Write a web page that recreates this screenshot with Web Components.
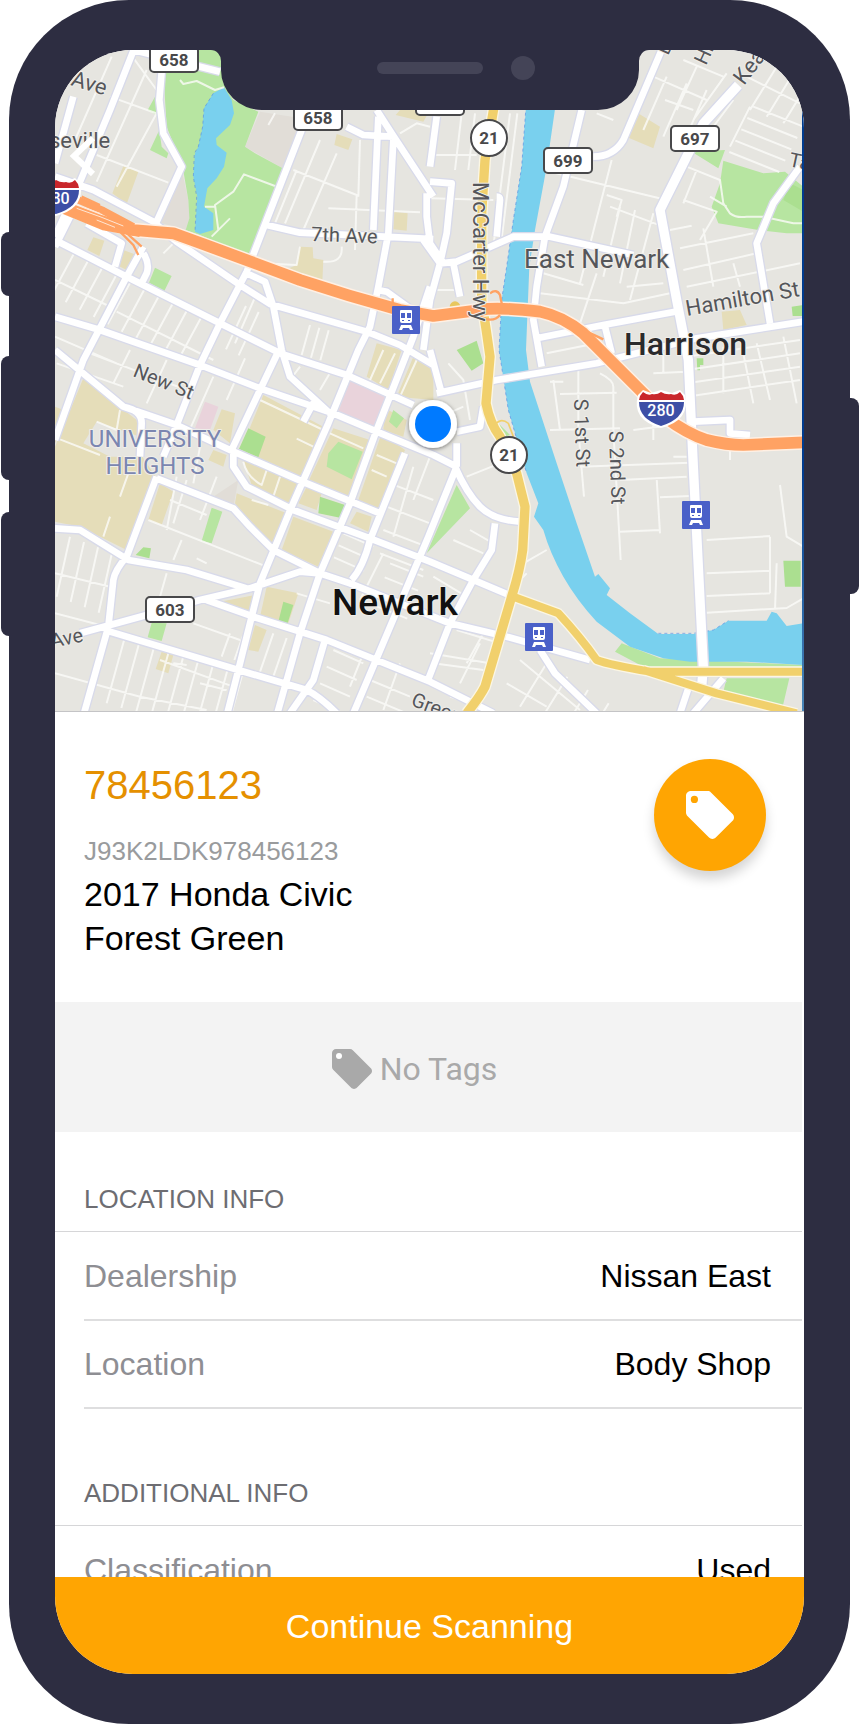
<!DOCTYPE html>
<html lang="en">
<head>
<meta charset="utf-8">
<meta name="viewport" content="width=device-width, initial-scale=1">
<title>Vehicle details</title>
<style>
  body { margin: 0; background: #fff; font-family: "Liberation Sans", Arial, sans-serif; }
</style>
</head>
<body>
<phone-frame>
  <city-map></city-map>
  <vehicle-summary>
    <span slot="stock">78456123</span>
    <span slot="vin">J93K2LDK978456123</span>
    <span slot="model">2017 Honda Civic</span>
    <span slot="paint">Forest Green</span>
  </vehicle-summary>
  <tag-strip>No Tags</tag-strip>
  <info-section>
    <span slot="title">LOCATION INFO</span>
    <info-row><span slot="label">Dealership</span>Nissan East</info-row>
    <info-row><span slot="label">Location</span>Body Shop</info-row>
  </info-section>
  <info-section>
    <span slot="title">ADDITIONAL INFO</span>
    <info-row><span slot="label">Classification</span>Used</info-row>
  </info-section>
  <action-button slot="footer">Continue Scanning</action-button>
</phone-frame>

<script>
function define(name, html) {
  const template = document.createElement('template');
  template.innerHTML = html;
  customElements.define(name, class extends HTMLElement {
    constructor() {
      super();
      this.attachShadow({ mode: 'open' }).append(template.content.cloneNode(true));
    }
  });
}

define('tag-icon', `
<style>
  :host { display: block; width: 40px; height: 40px; }
  svg { display: block; width: 100%; height: 100%; fill: currentColor; }
  circle { fill: var(--hole, #fff); }
</style>
<svg viewBox="2 2 20 20" aria-hidden="true">
  <path d="M21.41 11.58l-9-9C12.05 2.22 11.55 2 11 2H4c-1.1 0-2 .9-2 2v7c0 .55.22 1.05.59 1.42l9 9c.36.36.86.58 1.41.58s1.05-.22 1.41-.59l7-7c.37-.36.59-.86.59-1.41s-.23-1.06-.59-1.42z"/>
  <circle cx="5.5" cy="5.5" r="1.5"/>
</svg>`);

define('phone-frame', `
<style>
  :host { display: block; padding: 0 9px; }
  .body { position: relative; box-sizing: border-box; height: 100vh; min-height: 900px; padding: 50px 46px; background: #2d2d41; border-radius: 120px; }
  .screen { height: 100%; display: flex; flex-direction: column; overflow: hidden; background: #fff; border-radius: 78px; }
  .scroll { flex: 1; min-height: 0; overflow: auto; scrollbar-width: none; }
  .key { position: absolute; background: #2d2d41; width: 16px; }
  .left { left: -8px; border-radius: 8px 0 0 8px; }
  .right { right: -9px; border-radius: 0 8px 8px 0; }
  .notch { position: absolute; top: 50px; left: 50%; margin-left: -219px; width: 438px; height: 60px; }
  .back { position: absolute; left: 56px; top: 130px; width: 36px; height: 52px; padding: 0; border: 0; background: none; }
  .back svg { display: block; }
</style>
<div class="body">
  <i class="key left" style="top:232px;height:64px"></i>
  <i class="key left" style="top:356px;height:124px"></i>
  <i class="key left" style="top:512px;height:124px"></i>
  <i class="key right" style="top:398px;height:196px"></i>
  <div class="screen">
    <div class="scroll"><slot></slot></div>
    <slot name="footer"></slot>
  </div>
  <svg class="notch" viewBox="0 0 438 60" aria-hidden="true">
    <path fill="#2d2d41" d="M0 -1V0A10 11 0 0 1 10 11V20A41 40 0 0 0 51 60H387A41 40 0 0 0 428 20V11A10 11 0 0 1 438 0V-1Z"/>
    <rect x="166" y="12" width="106" height="12" rx="6" fill="#444457"/>
    <circle cx="312" cy="18" r="12" fill="#444457"/>
  </svg>
  <button class="back" type="button" aria-label="Back">
    <svg width="36" height="52" viewBox="0 0 36 52" fill="none" stroke="#fff" stroke-width="6"><path d="M28 8L9 26L28 44"/></svg>
  </button>
</div>`);

define('vehicle-summary', `
<style>
  :host { display: flex; justify-content: space-between; align-items: flex-start; box-sizing: border-box; padding: 47px 38px 30px 29px; min-height: 290px; }
  h1 { margin: 0 0 19px; font-size: 40px; line-height: 52px; font-weight: 400; color: #e59000; }
  p { margin: 0; font-size: 34px; line-height: 44px; color: #000; }
  .vin { font-size: 26px; line-height: 42px; color: #999b9d; }
  button { flex: none; width: 112px; height: 112px; border: 0; padding: 0; border-radius: 50%; background: #ffa502; color: #fff; display: grid; place-items: center; box-shadow: 0 8px 12px rgba(0,0,0,.17); --hole: #ffa502; }
  tag-icon { width: 48px; height: 48px; }
</style>
<div class="text">
  <h1><slot name="stock"></slot></h1>
  <p class="vin"><slot name="vin"></slot></p>
  <p><slot name="model"></slot></p>
  <p><slot name="paint"></slot></p>
</div>
<button type="button" aria-label="Add tag"><tag-icon></tag-icon></button>`);

define('tag-strip', `
<style>
  :host { display: flex; justify-content: center; align-items: center; gap: 8px; height: 130px; margin-right: 2px; padding: 4px 28px 0 0; box-sizing: border-box; background: #f3f3f3; color: #a9a9a9; font-family: Roboto, sans-serif; font-size: 32px; line-height: 40px; --hole: #fff; }
</style>
<tag-icon></tag-icon><span><slot></slot></span>`);

define('info-section', `
<style>
  :host { display: block; margin-right: 2px; padding-top: 51px; }
  h2 { margin: 0; padding: 0 29px 16px; font-size: 26px; line-height: 32px; font-weight: 400; color: #6d6d72; border-bottom: 1px solid #d6d6d8; }
  .rows { padding: 1px 0 17px 29px; }
</style>
<h2><slot name="title"></slot></h2>
<div class="rows"><slot></slot></div>`);

define('info-row', `
<style>
  :host { display: flex; justify-content: space-between; align-items: center; height: 86px; padding: 0 31px 0 0; border-bottom: 2px solid #dededf; font-size: 32px; line-height: 40px; color: #000; }
  .label { color: #8e8e93; }
</style>
<span class="label"><slot name="label"></slot></span><span><slot></slot></span>`);

define('action-button', `
<style>
  :host { display: block; }
  button { display: block; width: 100%; height: 97px; border: 0; padding: 0; background: #ffa502; color: #fff; font: inherit; font-size: 34px; line-height: 40px; }
</style>
<button type="button"><slot></slot></button>`);

/* n parallel segments: start x,y; direction vx,vy; step sx,sy */
const hatch = (x, y, vx, vy, sx, sy, n) =>
  Array.from({ length: n }, (_, i) => `M${x + sx * i} ${y + sy * i}l${vx} ${vy}`).join('');

const minor = [
  'M335 170L225 420M440 210L290 545M470 340L350 560M330 290L475 342M290 465L505 548M390 160L470 270',
  'M540 240L550 252L590 243L645 270L672 262M825 558L732 523L700 575L645 615L655 690M615 620H645M690 655L635 710',
  'M880 510L1070 585L1065 750M985 625L1260 637M890 510L825 670M960 420L855 670M1010 460L910 690M1080 420L1075 590M825 340L805 375M780 790L890 795L900 740M970 785Q1030 790 1025 740',
  'M165 840L320 915M350 935L640 1080M165 1010L350 1090',
  hatch(225, 755, -70, 130, 42, 22, 10),
  hatch(700, 900, -60, 130, 38, 18, 3), hatch(930, 975, -25, 90, 28, 8, 3), hatch(770, 880, -65, 150, 0, 0, 1),
  'M520 730L490 760M170 1090L370 1160M270 1060L560 1170M390 1050L340 1150M500 1080L440 1210M640 1130L560 1310M735 1075L680 1200M900 1100L870 1140M995 1110L960 1170',
  'M180 1318L300 1365M290 1265L350 1290L360 1230M385 1420L360 1490M330 1550L310 1610M530 1430L500 1590M560 1440L520 1570M510 1500L620 1545M445 1560L800 1700M650 1430L600 1560M545 1620L520 1680M590 1675L620 1690M500 1720L480 1790M600 1340L580 1450',
  'M780 1200L970 1290M890 1316L940 1340M990 1300L1090 1345M1130 1365L1190 1390M730 1385Q740 1430 785 1455L800 1410M840 1430L820 1490M755 1500L805 1515M1115 1410L1160 1430',
  hatch(210, 1610, -40, 180, 42, 16, 4), 'M165 1720L330 1760M165 1840L320 1880M165 2020L420 2090L620 2130',
  hatch(375, 1910, -55, 200, 44, 14, 9), 'M480 1980L700 2060M520 1990L560 1995M600 2050L680 2070M580 1870L720 1920',
  hatch(690, 1900, -25, 70, 38, 10, 2), hatch(820, 1900, -45, 130, 40, 14, 2), 'M890 1780L990 1810',
  hatch(1030, 1600, 90, 40, -14, 36, 3), hatch(1170, 1690, 100, 40, -16, 42, 4), hatch(1170, 1450, 130, 50, -10, 70, 4), 'M1240 1400L1180 1610M1290 1370L1240 1500M1150 1660L1080 1800',
  hatch(1000, 1950, 90, 40, -20, 50, 4), hatch(1110, 2040, 120, 50, -10, 50, 2), 'M1090 1960L1050 2060M1200 1990L1150 2130',
  'M1150 1050L1110 1140M1185 1060L1140 1150M1250 1080L1200 1190',
  'M1200 400L1250 370L1290 380M1290 465H1430M1290 595L1480 600M1300 870H1380',
  hatch(1385, 340, -20, 170, 40, 0, 2), hatch(1530, 340, -50, 400, 22, 0, 2),
  'M1650 515L2000 600M1960 230L2120 300M1790 340L1840 360',
  hatch(2000, 230, -70, 160, 60, 20, 3), hatch(2090, 200, -60, 130, 0, 0, 1), hatch(2180, 220, -100, 140, 0, 0, 1), 'M1995 300L2080 330M2050 180L2170 230M2200 300L2110 420M2250 320L2190 440',
  hatch(2260, 320, 150, 60, -18, 34, 5), hatch(2330, 200, -80, 130, 50, 20, 3), 'M2240 230L2400 310',
  'M2060 500L2160 540L2170 610L2190 640Q2210 655 2240 650H2290L2380 670H2410M2050 600L2150 635L2100 720M2130 590L2180 620M2090 510L2050 610',
  'M1835 480L1740 850M1820 585L1865 600L1850 650M1860 620L1810 830M1905 630L1860 850M1960 640L1890 900M1830 620L1990 680M2010 690L2075 677M2110 685L2140 860M2040 745L2260 700M2050 810L2270 760M2060 860L2400 790M2200 790L2220 860',
  'M1630 820L1750 855M1620 880L1870 910L2010 880M1610 940L1700 960M1790 820L1730 1000M1880 860L1990 850M1640 1060L1790 1030',
  hatch(2060, 1070, 340, -50, 0, 40, 4), 'M2170 1040V1180M2230 1060L2260 1210M2270 1030L2310 1200M2350 1010L2390 1210M1990 1060V1120M1960 1120L2060 1115M2080 1140V1250',
  'M1660 1140L1680 1290M1650 1145H1690M1735 1110V1290L1752 1490M1800 1120Q1840 1140 1840 1160V1290L1862 1680M1680 1182L1850 1178M1650 1290L1860 1285M1960 1180V1320M1900 1290L2060 1270M1740 1400L2070 1388M2020 1370H2060M1970 1436L1980 1600M1860 1440L2060 1430M1860 1595L1980 1590M1980 1492L2070 1488M2190 1280V1380',
  'M2340 1455L2360 1610L2410 1640M2120 1620L2310 1608M2120 1720L2310 1712M2120 1788L2310 1780M2120 1838L2360 1824L2410 1795M2310 1610V1780M2330 1690L2325 1830',
  'M1345 1090L1390 1140L1410 1260M1300 1260L1390 1220M1400 1430L1500 1390M1410 1590L1480 1630M1360 1620L1450 1660M1300 1730L1400 1790M1340 1700L1380 1720M1570 1690L1640 1650M1580 1720L1540 1760M1450 1900L1400 1990M1300 1990L1450 2010M1370 1890L1500 1930M1440 1930L1380 2050M1290 1960L1470 1990',
  hatch(1640, 1990, -80, 130, 62, 40, 5), 'M1520 2050L1640 2120M1560 1980L1740 2130M1350 2090L1440 2120'
].join('');

const major = [
  'M405 140L330 330L240 545L165 710M220 290L165 490M165 530L280 570L460 665L530 725L720 855L810 912L1100 995L1200 1035L1300 1095',
  'M485 215L478 300L490 400L545 500L470 665M400 150L660 215',
  'M165 720L380 830L660 970L845 1062L1040 1125L1240 1215M165 950L300 990L600 1095L780 1165L1000 1240L1130 1295L1300 1365L1370 1400',
  'M905 390L800 660L740 815L660 970L600 1095L530 1275L490 1370M800 675L900 698L1150 710L1300 717M1130 330L1175 400L1300 590M1040 380L1090 405L1175 410M1135 350L1120 690',
  'M1180 420L1165 700L1135 860L1110 980L1075 1050L985 1270L875 1520L780 1750L715 2010L682 2140M740 820L795 845L820 920L845 1050L870 1130L990 1240M1135 870L1160 875L1250 940',
  'M1280 580V650L1290 730L1330 790M1290 860L1240 1010L1130 1290L1050 1510L960 1720L900 1900L832 2140',
  'M165 740L210 650M260 670L365 730L345 800M430 740L380 830L250 1080L165 1320M430 760Q450 790 440 820L425 850',
  'M165 1050L370 1220L530 1275L690 1350L920 1450L1140 1540M370 1220Q425 1230 425 1270L420 1370',
  'M470 1430L380 1670Q345 1710 340 1740L325 1880L252 2140M470 1435L700 1525L750 1580L820 1650L960 1720L1050 1750L1350 1870L1520 1910L1770 1980',
  'M165 1585L240 1590L385 1680L560 1710L740 1765M240 1900L440 1845L600 1800L750 1765L900 1715L960 1720M620 1800L760 1850L980 1920L1290 2045L1480 2140M330 1895L715 2010L920 2070Q960 2090 1010 2140',
  'M975 1920L940 2040L870 2140M1215 1360L1110 1620Q1090 1700 1055 1740M700 1360V1400L740 1460L880 1530L1110 1615L1290 1685L1540 1790M830 1065L780 1170L690 1360',
  'M1370 1400L1285 1610L1060 2140M1420 1740L1350 1870L1280 2050M1485 1570L1475 1650L1420 1740M1365 1400Q1400 1480 1440 1520T1560 1565',
  'M1290 1050L1325 1180M1370 1330V1400M1370 1295L1440 1280L1450 1220M1310 1180L1490 1140L1790 1090L2090 1015L2410 965M1610 1015L1810 975L2025 935M910 1265L945 1200M940 1200L990 1240',
  'M1290 545L1355 550L1340 700L1320 790L1290 900M1270 720L1320 790M1310 350L1290 500M1490 590Q1500 590 1500 600L1490 710M1320 790L1370 785L1540 710H1650L1900 765M1360 790L1380 890',
  'M1745 330L1690 560L1635 710L1610 860L1600 960L1625 1100M1985 150L1870 420Q1840 470 1780 470M1815 980L1835 1060',
  'M2400 500L2320 610L2270 730L2310 970M2080 1265L2190 1260V1300L2250 1305M1620 1950L1665 2020L1790 2140M2170 2035L2080 2140M2070 2050L2040 2140M1290 900L1270 1050'
].join('');

const wide = 'M2215 255L2110 370L1980 630L2030 900L2065 1080L2080 1400L2110 2000L2105 2060';
const highway = 'M190 620L300 662L400 690L520 700Q700 765 900 840Q1050 890 1200 930L1300 948L1440 930Q1490 920 1620 935Q1690 950 1750 1000L1930 1180L2000 1255Q2060 1300 2120 1320Q2180 1335 2230 1335L2412 1327';
const route21 = 'M1482 320L1455 480L1445 640V900L1460 1000L1470 1070L1458 1210Q1470 1270 1500 1310L1550 1420L1575 1520L1568 1650Q1560 1710 1535 1790L1455 2060Q1440 2090 1400 2140';
const route21b = 'M1540 1790L1675 1840Q1740 1910 1790 1980Q1830 1995 1950 2015H2412M1930 2010L2150 2080L2390 2140';

const train = (x, y) => `<g transform="translate(${x} ${y})">
  <rect width="28" height="28" rx="1" fill="#4a60c8"/>
  <path fill="#fff" fill-rule="evenodd" d="M9 4H19Q20 4 20 5V15Q20 17 18 17H10Q8 17 8 15V5Q8 4 9 4ZM9 7V12H13V7ZM15 7V12H19V7ZM10 14V15H12V14ZM16 14V15H18V14ZM9 19H19L21 24H18L17 22H11L10 24H7Z"/></g>`;
const box = (x, y, t) => `<rect x="${x - 24}" y="${y - 13}" width="48" height="25" rx="4" fill="#fff" stroke="#48484a" stroke-width="2"/>${t && `<text class="no" x="${x}" y="${y + 6}">${t}</text>`}`;
const disc = (x, y) => `<circle cx="${x}" cy="${y}" r="18" fill="#fff" stroke="#48484a" stroke-width="2"/><text class="no" x="${x}" y="${y + 6}">21</text>`;
const shield = (x, y) => `<g transform="translate(${x} ${y})">
  <path fill="#fff" d="M-1 3L4 -2L12 1L22 -2L33 1L41 -2L46 3Q52 28 22 36Q-8 28 -1 3Z"/>
  <path fill="#c9272b" d="M1 4L4 0Q9 4 13 2Q18 3 22 0Q27 3 32 2Q37 4 41 0L44 4L45 8H0Z"/>
  <path fill="#3d4fa6" d="M0 10H45Q45 27 22 34Q0 27 0 10Z"/>
  <text class="sh" x="22" y="24">280</text></g>`;

define('city-map', `
<style>
  :host { display: block; border-bottom: 1px solid #c4c4c6; }
  svg { display: block; width: 100%; height: auto; }
  text { font-family: Roboto, sans-serif; fill: #55565a; font-size: 20px; stroke: #efeeea; stroke-width: 2px; paint-order: stroke; stroke-linejoin: round; }
  .no { font-size: 17px; font-weight: 700; fill: #48484a; text-anchor: middle; stroke: none; }
  .sh { font-size: 16px; font-weight: 500; fill: #fff; text-anchor: middle; stroke: none; }
  .road { font-size: 22px; }
  .town { font-size: 26px; }
  .city { font-size: 32px; font-weight: 500; fill: #2a2a2c; }
  .main { font-size: 37px; font-weight: 500; fill: #111; }
  .area { font-size: 24px; fill: #7b86b0; text-anchor: middle; }
</style>
<svg viewBox="55 50 749 661" role="img" aria-label="Map of Newark">
  <defs>
    <linearGradient id="edge" x1="0" y1="0" x2="0" y2="1"><stop offset="0" stop-color="#003b8e"/><stop offset=".6" stop-color="#003b8e"/><stop offset="1" stop-color="#4a86b8"/></linearGradient>
    <filter id="soft" x="-30%" y="-30%" width="160%" height="160%"><feDropShadow dx="0" dy="1" stdDeviation="2" flood-opacity=".5"/></filter>
  </defs>
  <rect x="50" y="45" width="760" height="670" fill="#e6e5e0"/>
  <g transform="scale(.33333333)" fill="none" stroke-linejoin="round">
    <path fill="#e1ddd7" d="M545 510L565 600L568 655L557 690L470 665ZM780 335L1000 370L900 400L848 505L735 440ZM715 1440L700 1520L640 1490Z"/>
    <path fill="#e5ddb9" d="M370 498l45 17l-35 97l-43 -32ZM1010 402l47 16l-12 32l-42 -15ZM1183 635l40 5l-3 52l-40 -4ZM900 740l38 2l2 33l30 5l-3 65l-107 -37l30 -13ZM280 712l33 10l-15 46l-36 -18ZM370 750l40 15l-25 47l-35 -17ZM1200 330h90l-20 35l-83 -20Z
      M250 1135L410 1260L420 1360L470 1435L380 1650L240 1580L165 1565V1340ZM165 1220l20 8l-10 82l-10 20ZM480 1450l40 25l-35 100l-40 -15ZM665 1228l40 12l-15 90l-50 -40ZM640 1350l40 15l-10 35l-45 -20Z
      M790 1185L970 1280L915 1435L720 1355ZM1000 1285L1110 1320L1050 1490L925 1445ZM1145 1300L1215 1350L1140 1530L1075 1500ZM730 1380L900 1450L870 1520L760 1470ZM710 1480L860 1540L820 1635L750 1570L705 1510ZM880 1550L1000 1595L955 1700L845 1650ZM920 1460l45 20l-15 50l-55 -20ZM1070 1535l45 15l-10 45l-55 -25Z
      M1130 1030L1205 1050L1165 1170L1100 1130ZM1240 1070L1300 1100V1200L1190 1190ZM660 1805L765 1785L750 1835ZM800 1760L895 1780L865 1870L780 1850ZM765 1875l35 15l-25 65l-30 -5ZM485 1955l35 10l-15 55l-38 -13ZM1155 1225L1220 1260L1210 1310L1150 1290Z
      M1918 342l62 38l-20 65l-78 -33ZM2165 935l55 -5l20 45l-70 15ZM1280 1105L1300 1120V1170H1280Z"/>
    <path fill="#e6e5e0" d="M290 1265L420 1310V1370H330L250 1330Z"/>
    <path fill="#e9d3db" d="M615 1205l40 15l-25 70l-45 -5ZM1050 1138L1155 1190L1125 1280L1015 1235Z"/>
    <path fill="#b7e5a1" d="M490 215L597 195V140H670V250L700 300L775 335L735 440L765 460L848 505L750 770L600 705L557 690L568 655L565 600L548 500L500 380ZM468 285L443 330L470 345ZM478 390L450 450L500 475L505 460L485 440ZM465 803l50 25l-22 45l-46 -25Z
      M1015 1325L1088 1355L1055 1438L980 1400L985 1360ZM635 1523l32 12l-32 95l-30 -7ZM1180 1230l32 25l-22 30l-23 -20ZM455 1868l45 2l-15 53l-42 -11ZM1370 1455L1410 1525L1280 1660ZM1845 1955L1865 1930L1980 1975L2410 1995V2000H1930ZM2180 2035H2368L2348 2120L2170 2075ZM1495 1270L1530 1305L1515 1310Z
      M2075 455L2175 450L2155 505ZM2170 482L2290 520L2355 515L2410 560V700H2360L2275 690L2155 670L2135 620L2160 550Z"/>
    <path fill="#abdf90" d="M745 1285l52 25l-22 62l-58 -25ZM960 1490l75 25l-15 38l-65 -13ZM850 1805l30 10l-18 57l-27 -7ZM407 1665l23 -23l23 3l-5 30ZM2350 1682H2402V1760H2355ZM2375 920l35 -5v33h-32ZM1370 1050L1430 1022L1450 1090L1415 1112ZM2370 550L2410 570V635L2350 600ZM2090 1075h20v20h-10v16h-8Z"/>
    <path fill="#79d0ee" d="M672 262L640 280L612 325L608 380L595 440L585 460L580 530L592 590L585 695L600 702L640 690V640L612 620L622 565L650 535L672 500L680 458L650 435L648 415L690 375L702 340L695 300Z
      M1578 320L1565 500L1540 660L1520 800L1505 900L1497 1050L1525 1230L1580 1420L1615 1510L1602 1550L1630 1590Q1650 1660 1690 1730T1790 1865L1890 1940L1990 1975L2070 1985H2240L2410 1995V1870L2360 1878L2330 1840L2315 1835L2300 1862H2185L2140 1890L2080 1902H1975L1890 1840L1820 1785L1830 1765L1795 1722L1785 1730L1730 1570L1670 1390L1590 1145L1578 1050L1588 800L1605 690L1640 500L1666 320Z"/>
    <path stroke="#5b93e6" stroke-width="3" stroke-dasharray="9 9" stroke-opacity=".7" d="M640 280L612 325L608 380L595 440L583 460L580 530L590 590L585 695M1578 320L1565 500L1540 660L1520 800L1505 900L1497 1050L1525 1230L1580 1420M1975 1900H2080L2140 1890L2185 1862"/>
    <path stroke="#fbfbf9" stroke-width="6" stroke-opacity=".8" d="${minor}"/>
    <path stroke="#d8daea" stroke-width="28" d="${major}"/>
    <path stroke="#d8daea" stroke-width="36" d="${wide}"/>
    <path stroke="#fff" stroke-width="20" d="${major}"/>
    <path stroke="#fff" stroke-width="28" d="${wide}"/>
    <path stroke="#fbf6e4" stroke-width="36" d="${route21}"/>
    <path stroke="#fbf6e4" stroke-width="32" d="${route21b}"/>
    <path stroke="#f1d06c" stroke-width="28" d="${route21}"/>
    <path stroke="#f1d06c" stroke-width="24" d="${route21b}"/>
    <path stroke="#f1d06c" stroke-width="5" d="M1480 1280Q1500 1250 1525 1270L1540 1310"/>
    <circle cx="1365" cy="920" r="16" fill="#e8c75e"/>
    <path stroke="#fff0e4" stroke-width="44" d="${highway}"/>
    <path stroke="#ffa263" stroke-width="35" d="${highway}"/>
    <path stroke="#ffa263" stroke-width="22" d="M235 600L310 632L400 680M190 630L310 680L420 700"/>
    <path stroke="#ffe6d3" stroke-width="3" d="M230 625L300 650L370 678M245 620L300 640M290 660L345 682"/>
    <path stroke="#ffa263" stroke-width="7" d="M360 695L400 735L415 765M375 695L425 740M245 590L300 615M1178 895V920M1470 880Q1490 865 1500 885L1505 910M1440 950Q1480 970 1500 945M1740 985L1810 1018"/>
  </g>

  <text class="road" transform="translate(70 85) rotate(17)">Ave</text>
  <text class="road" x="49" y="148">seville</text>
  <text transform="translate(311 241) rotate(2)">7th Ave</text>
  <text transform="translate(132 376) rotate(22)">New St</text>
  <text transform="translate(52 648) rotate(-12)">Ave</text>
  <text transform="translate(410 705) rotate(21)">Green</text>
  <text class="road" transform="translate(473 182) rotate(90)">McCarter Hwy</text>
  <text transform="translate(574 399) rotate(88)">S 1st St</text>
  <text transform="translate(609 431) rotate(88)">S 2nd St</text>
  <text class="road" transform="translate(687 316) rotate(-10)">Hamilton St</text>
  <text transform="translate(668 56) rotate(-65)">B</text>
  <text transform="translate(706 66) rotate(-65)">Hi</text>
  <text class="road" transform="translate(744 86) rotate(-53)">Kea</text>
  <text transform="translate(788 166) rotate(12)">Ta</text>
  <text class="town" x="524" y="268">East Newark</text>
  <text class="city" x="624" y="355">Harrison</text>
  <text class="main" x="332" y="615">Newark</text>
  <text class="area" x="155" y="447">UNIVERSITY</text>
  <text class="area" x="155" y="474">HEIGHTS</text>

  ${box(174, 60, '658')}${box(318, 118, '658')}${box(440, 103, '')}${box(568, 161, '699')}${box(695, 139, '697')}${box(170, 610, '603')}
  ${disc(489, 138)}${disc(509, 455)}
  ${shield(34, 180)}${shield(639, 392)}
  ${train(392, 306)}${train(682, 501)}${train(525, 623)}
  <circle cx="433" cy="424" r="24" fill="#fff" filter="url(#soft)"/>
  <circle cx="433" cy="424" r="18" fill="#007aff"/>
  <rect x="802" y="105" width="2" height="606" fill="url(#edge)"/>
</svg>`);
</script>
</body>
</html>
